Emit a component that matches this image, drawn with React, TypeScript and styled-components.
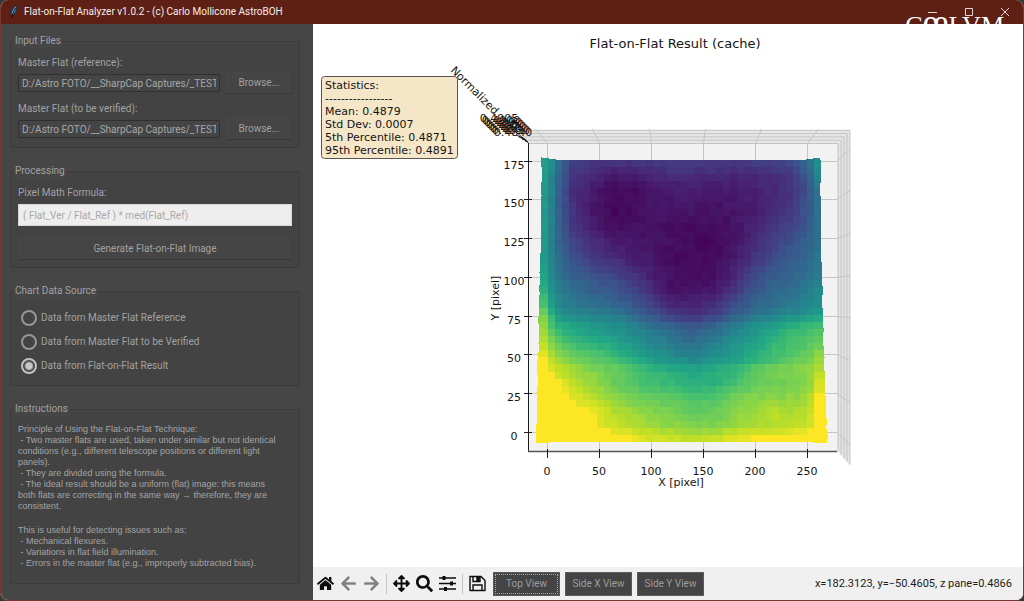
import React, { useState } from "react";
import styled, { createGlobalStyle } from "styled-components";
import { FaArrowLeft, FaArrowRight, FaArrowsAlt, FaHome, FaSearch } from "react-icons/fa";

const GlobalStyle = createGlobalStyle`
  * { box-sizing: border-box; }
  body { margin: 0; background: #2f3a38; }
  button, input { font: inherit; }
`;

const uiFont = `Roboto, "Noto Sans", sans-serif`;
const plotFont = `"DejaVu Sans", sans-serif`;

const Window = styled.div`
  position: relative;
  display: flex;
  flex-direction: column;
  min-height: 100vh;
  overflow: hidden;
  border: 1px solid #74392f;
  border-top: 0;
  border-radius: 8px;
  background: #ffffff;
  font-family: ${uiFont};
  font-size: 10px;
  line-height: 14px;
  color: #a2a2a2;
`;

const TitleBar = styled.header`
  display: flex;
  align-items: center;
  height: 24px;
  padding: 0 13px 0 8px;
  gap: 5px;
  background: #5e2015;
  color: #f4ecea;
`;

const Title = styled.h1`
  flex: 1;
  margin: 0;
  font-size: 10px;
  font-weight: 400;
`;

const WindowButtons = styled.div`
  display: flex;
  gap: 26px;
`;

const WindowButton = styled.button`
  display: flex;
  padding: 0;
  border: 0;
  background: none;
  color: #e8d8d4;
`;

const Watermark = styled.div`
  position: absolute;
  top: 7px;
  right: 19px;
  font-family: "Liberation Serif", serif;
  font-size: 26px;
  line-height: 30px;
  color: #ffffff;
  pointer-events: none;
`;

const WatermarkLigature = styled.span`
  font-size: 36px;
  line-height: 30px;
`;

const Body = styled.div`
  display: flex;
  flex: 1;
`;

const Sidebar = styled.aside`
  display: flex;
  flex-direction: column;
  gap: 16px;
  width: 312px;
  flex-shrink: 0;
  padding: 10px 13px 16px 9px;
  background: #464646;
`;

const Group = styled.fieldset<{ $grow?: boolean }>`
  margin: 0;
  min-width: 0;
  padding: 8px 7px 7px;
  border: 1px solid #3b3b3b;
  border-radius: 2px;
  background: #434343;
  flex: ${(p) => (p.$grow ? "1" : "none")};
`;

const Legend = styled.legend`
  margin-left: -4px;
  padding: 0 2px 0 1px;
  background: #464646;
`;

const Field = styled.div`
  display: flex;
  flex-direction: column;
  gap: 2px;
  & + & { margin-top: 8px; }
`;

const FileRow = styled.div`
  display: flex;
  align-items: center;
  gap: 6px;
`;

const PathInput = styled.input`
  flex: 1;
  min-width: 0;
  height: 18px;
  padding: 0 3px;
  border: 1px solid #303030;
  border-radius: 2px;
  background: #454545;
  color: #a8a8a8;
  outline: 0;
`;

const FormulaInput = styled.input`
  width: 100%;
  height: 22px;
  margin-top: 2px;
  padding: 0 4px;
  border: 1px solid #d8d8d8;
  background: #eeeeee;
  color: #a9a9a9;
  outline: 0;
`;

const PanelButton = styled.button<{ $wide?: boolean }>`
  width: ${(p) => (p.$wide ? "100%" : "66px")};
  height: 22px;
  margin-top: ${(p) => (p.$wide ? "12px" : "0")};
  padding: 0;
  border: 1px solid #484848;
  border-bottom-color: #383838;
  border-right-color: #3e3e3e;
  border-radius: 2px;
  background: #454545;
  color: inherit;
`;

const RadioRow = styled.label`
  display: flex;
  align-items: center;
  gap: 4px;
  height: 24px;
  padding-left: 3px;
`;

const Radio = styled.input`
  appearance: none;
  width: 16px;
  height: 16px;
  margin: 0;
  border: 2px solid #969696;
  border-radius: 50%;
  &:checked {
    border-color: #c2c2c2;
    background: radial-gradient(circle, #c8c8c8 3px, transparent 5px);
  }
`;

const Instructions = styled.div`
  font-family: "Liberation Sans", sans-serif;
  font-size: 9px;
  line-height: 11px;
  white-space: pre-wrap;
  color: #a4a4a4;
  p { margin: 0 0 13px; }
  p:last-child { margin: 0; }
`;

const Main = styled.main`
  display: flex;
  flex-direction: column;
  flex: 1;
  min-width: 0;
  background: #ffffff;
`;

const Plot = styled.svg`
  display: block;
  flex: 1 1 0;
  width: 100%;
  min-height: 0;
  font-family: ${plotFont};
  font-size: 11px;
  fill: #141414;
`;

const Toolbar = styled.div`
  display: flex;
  align-items: center;
  gap: 4px;
  height: 33px;
  padding: 0 11px 0 3px;
  background: #f0f0f0;
  color: #0c0c0c;
`;

const IconButton = styled.button<{ $dim?: boolean }>`
  display: flex;
  align-items: center;
  justify-content: center;
  width: 19px;
  height: 24px;
  padding: 0;
  border: 0;
  background: none;
  font-size: 17px;
  color: ${(p) => (p.$dim ? "#808080" : "#0c0c0c")};
`;

const Separator = styled.span`
  width: 1px;
  height: 20px;
  margin: 0 1px;
  background: #c4c4c4;
`;

const Views = styled.div`
  display: flex;
  gap: 5px;
  margin-left: 2px;
`;

const ViewButton = styled.button<{ $focused?: boolean }>`
  width: 67px;
  height: 24px;
  padding: 0;
  border: 1px solid #5c5c5c;
  background: #444444;
  color: #9c9c9c;
  outline: ${(p) => (p.$focused ? "1px dotted #a8a8a8" : "none")};
  outline-offset: -3px;
`;

const Coordinates = styled.output`
  margin-left: auto;
  font-size: 11px;
  color: #1c1c1c;
  white-space: nowrap;
`;

const VIRIDIS = [
  [68, 1, 84], [72, 36, 117], [65, 68, 135], [53, 95, 141], [42, 120, 142], [33, 145, 140],
  [34, 168, 132], [68, 191, 112], [122, 209, 81], [189, 223, 38], [253, 231, 37],
];

function viridis(t: number) {
  const s = Math.max(0, Math.min(0.9999, t)) * 10;
  const i = Math.floor(s);
  const c = VIRIDIS[i].map((v, k) => Math.round(v + (VIRIDIS[i + 1][k] - v) * (s - i)));
  return `rgb(${c.join(",")})`;
}

// Flat ratio samples in percent of the colour range, at the columns and rows listed here.
const SAMPLE_X = [545, 553, 560, 573, 593, 613, 633, 653, 673, 693, 713, 733, 753, 773, 793, 807, 817];
const SAMPLES: [number, number[]][] = [
  [160, [58, 48, 35, 20, 17, 16, 16, 17, 18, 18, 18, 18, 18, 20, 24, 35, 50]],
  [177, [56, 44, 32, 14, 11, 6, 7, 10, 12, 12, 11, 10, 11, 13, 16, 28, 45]],
  [193, [54, 42, 30, 13, 7, 2, 3, 6, 8, 7, 6, 7, 8, 11, 15, 24, 38]],
  [210, [54, 42, 29, 15, 6, 1, 3, 6, 4, 6, 5, 6, 7, 12, 17, 26, 36]],
  [227, [53, 42, 30, 17, 8, 4, 4, 5, 3, 3, 3, 5, 9, 16, 20, 28, 36]],
  [243, [53, 43, 31, 20, 13, 8, 6, 5, 4, 3, 2, 5, 12, 18, 26, 31, 37]],
  [260, [54, 43, 34, 26, 18, 14, 9, 6, 3, 3, 3, 7, 15, 24, 30, 34, 39]],
  [277, [57, 46, 38, 31, 26, 22, 15, 8, 4, 3, 4, 10, 22, 29, 33, 37, 42]],
  [293, [64, 50, 43, 37, 32, 28, 22, 12, 5, 5, 7, 16, 27, 33, 38, 42, 47]],
  [310, [75, 56, 48, 44, 40, 37, 31, 22, 13, 12, 15, 25, 34, 39, 44, 47, 51]],
  [319, [82, 65, 55, 52, 48, 45, 39, 30, 22, 18, 23, 33, 42, 48, 54, 57, 60]],
  [327, [84, 70, 62, 59, 54, 50, 45, 37, 32, 28, 33, 42, 50, 57, 65, 67, 70]],
  [343, [90, 80, 75, 68, 64, 59, 51, 45, 40, 36, 42, 50, 57, 65, 70, 72, 76]],
  [360, [97, 89, 84, 79, 75, 71, 62, 54, 49, 46, 51, 56, 62, 70, 75, 78, 84]],
  [370, [100, 95, 91, 86, 81, 77, 72, 67, 62, 60, 62, 66, 75, 79, 82, 84, 90]],
  [383, [100, 100, 97, 90, 85, 77, 72, 69, 66, 62, 63, 68, 76, 78, 79, 81, 93]],
  [397, [100, 100, 100, 95, 89, 83, 79, 76, 74, 71, 72, 78, 81, 82, 83, 85, 97]],
  [413, [100, 100, 100, 100, 97, 90, 86, 82, 79, 76, 76, 82, 86, 89, 88, 90, 99]],
  [427, [100, 100, 100, 100, 98, 92, 89, 85, 83, 81, 80, 85, 87, 89, 90, 92, 100]],
  [433, [100, 100, 100, 100, 100, 97, 94, 91, 89, 87, 87, 91, 93, 95, 96, 98, 100]],
  [441, [100, 100, 100, 100, 100, 99, 97, 94, 92, 92, 93, 96, 99, 100, 100, 100, 100]],
];

function bracket(list: number[], v: number): [number, number] {
  if (v <= list[0]) return [0, 0];
  for (let i = 0; i < list.length - 1; i++) {
    if (v < list[i + 1]) return [i, (v - list[i]) / (list[i + 1] - list[i])];
  }
  return [list.length - 2, 1];
}

const SAMPLE_Y = SAMPLES.map((s) => s[0]);

function valueAt(x: number, y: number) {
  const [i, u] = bracket(SAMPLE_X, x);
  const [j, v] = bracket(SAMPLE_Y, y);
  const top = SAMPLES[j][1];
  const bottom = SAMPLES[j + 1][1];
  const a = top[i] + (top[i + 1] - top[i]) * u;
  const b = bottom[i] + (bottom[i + 1] - bottom[i]) * u;
  return (a + (b - a) * v) / 100;
}

function noise(a: number, b: number) {
  const n = Math.sin(a * 12.9898 + b * 78.233) * 43758.5453;
  return n - Math.floor(n) - 0.5;
}

const GRID = 40;
const rowY = (j: number) => 160 + (282 * j) / GRID;

// The outer columns lean outwards towards the bottom; the inner ones stay straight.
function columnX(i: number, y: number) {
  const drop = (y - 160) / 283;
  if (i === 0) return 541.5 - 6 * Math.pow(drop, 1.5) + noise(y, 3) * 1.2;
  if (i === GRID) return 820.5 + 7 * Math.pow(drop, 1.8) + noise(y, 5) * 1.2;
  return 541.5 + (279 * i) / GRID;
}

function cornerY(i: number, j: number) {
  const edge = Math.max(0, 3 - Math.min(i, GRID - i)) / 3;
  if (j === 0) return 160.4 - edge * 3;
  if (j === GRID) return 441.5 + edge * 1.6;
  return rowY(j);
}

function buildSurface() {
  const cells: { d: string; fill: string }[] = [];
  for (let j = 0; j < GRID; j++) {
    for (let i = 0; i < GRID; i++) {
      const y0 = rowY(j);
      const y1 = rowY(j + 1);
      const value = valueAt(541.5 + 279 * ((i + 0.5) / GRID), (y0 + y1) / 2);
      cells.push({
        d: `M${columnX(i, y0)} ${cornerY(i, j)}L${columnX(i + 1, y0)} ${cornerY(i + 1, j)}L${columnX(i + 1, y1)} ${cornerY(i + 1, j + 1)}L${columnX(i, y1)} ${cornerY(i, j + 1)}Z`,
        fill: viridis(value >= 0.965 ? 1 : value + noise(i, j) * 0.028),
      });
    }
  }
  return cells;
}

const SURFACE = buildSurface();

// Each tick: value, position on the near pane, position on the far edge of the side pane.
const X_TICKS = [[0, 547, 535], [50, 599, 592], [100, 651, 649], [150, 703, 705], [200, 755, 761], [250, 807, 818]];
const Y_TICKS = [
  [175, 161, 148], [150, 199, 190], [125, 238, 233], [100, 277, 275],
  [75, 316, 317], [50, 354, 360], [25, 393, 402], [0, 432, 444],
];
const STATISTICS = [
  "Statistics:", "-----------------", "Mean: 0.4879", "Std Dev: 0.0007",
  "5th Percentile: 0.4871", "95th Percentile: 0.4891",
];
const Z_TICKS = ["0.4905", "0.4900", "0.4890", "0.4880", "0.4870", "0.4860", "0.4850", "0.4840"];

function SurfacePlot() {
  return (
    <Plot viewBox="313 24 710 543" role="img" aria-label="Flat-on-Flat Result surface plot">
      <text x="675" y="48" fontSize="13" textAnchor="middle">Flat-on-Flat Result (cache)</text>

      <path d="M529 143H838V451H529Z" fill="#f2f2f2" />
      <path d="M515 130H850L838 143H529Z" fill="#e6e6e6" />
      <path d="M838 143L850 130V465L838 451Z" fill="#e3e3e3" />
      <g fill="none" stroke="#c4c4c4">
        {[0, 1, 2, 3, 4].map((k) => (
          <path key={k} d={`M${529 - k * 3.5} ${143.5 - k * 3.3}H${838 + k * 3}V${452 + k * 3.2}`} />
        ))}
        {X_TICKS.map(([v, near, far]) => (
          <path key={v} d={`M${near + 0.5} 451V143.5L${far + 0.5} 129`} />
        ))}
        {Y_TICKS.map(([v, near, far]) => (
          <path key={v} d={`M529 ${near + 0.5}H837L850 ${far + 0.5}`} />
        ))}
      </g>

      <g shapeRendering="crispEdges">
        {SURFACE.map((c) => (
          <path key={c.d} d={c.d} fill={c.fill} />
        ))}
      </g>

      <g stroke="#1c1c1c" fill="none">
        <path d="M515 131L528.5 143V451.5" />
        <path d="M528 451.5H837" stroke="#555555" strokeWidth="1.4" />
        {X_TICKS.map(([v, near]) => <path key={v} d={`M${near + 0.5} 449V458`} />)}
        {Y_TICKS.map(([v, near]) => <path key={v} d={`M524 ${near + 0.5}H532`} />)}
        {[0, 1, 2, 3].map((k) => <path key={k} d={`M${516 + k * 3} ${135 + k * 2}L${525 + k} ${139 + k}`} />)}
      </g>

      <g textAnchor="middle">
        {X_TICKS.map(([v, near]) => <text key={v} x={near} y="475">{v}</text>)}
        {Y_TICKS.map(([v, near]) => <text key={v} x="514" y={near + 8}>{v}</text>)}
        <text x="681" y="486">X [pixel]</text>
        <text transform="translate(499 298) rotate(-90)">Y [pixel]</text>
        {Z_TICKS.map((t, k) => <text key={t} x={499 + k * 2} y={122 + k * 2}>{t}</text>)}
      </g>
      <text transform="translate(450 71) rotate(45)" fontSize="11">Normalized</text>

      <rect x="321.5" y="76.5" width="136" height="82" rx="3" fill="#f5e6c8" stroke="#5a564e" />
      {STATISTICS.map((line, k) => (
        <text key={line} x="325" y={89 + k * 13}>{line}</text>
      ))}
    </Plot>
  );
}

function FeatherIcon() {
  return (
    <svg width="10" height="14" viewBox="0 0 10 14" aria-hidden="true">
      <path d="M7.500 .5C4.500 2 2 5.500 2.300 10L3.500 10.500C6.500 8.500 8 5 7.500 .5Z" fill="#4a9bd8" stroke="#16253c" strokeWidth=".8" />
      <path d="M6.500 3C5 6 3.500 9 2.500 13.500" stroke="#111111" fill="none" />
    </svg>
  );
}

function SlidersIcon() {
  return (
    <svg width="17" height="17" viewBox="0 0 17 17" aria-hidden="true">
      <path d="M0 3H17M0 8.500H17M0 14H17" stroke="currentColor" strokeWidth="1.500" />
      <path d="M3.500 1H6.500V5H3.500ZM11 6.500H14V10.500H11ZM5 12H8V16H5Z" fill="currentColor" />
    </svg>
  );
}

function SaveIcon() {
  return (
    <svg width="17" height="17" viewBox="0 0 17 17" aria-hidden="true" fill="none" stroke="currentColor" strokeWidth="1.400">
      <path d="M1 1.500H12L16 5.500V15.500H1Z" strokeLinejoin="round" />
      <path d="M4 15V10H13V15M4 2V6.500H11V2" />
      <path d="M8 2.500H10V5.500H8Z" fill="currentColor" />
    </svg>
  );
}

const PATH = "D:/Astro FOTO/__SharpCap Captures/_TEST/Flat_Master.fits";
const SOURCES = ["Data from Master Flat Reference", "Data from Master Flat to be Verified", "Data from Flat-on-Flat Result"];

export default function App() {
  const [source, setSource] = useState(2);
  return (
    <>
      <GlobalStyle />
      <Window>
        <TitleBar>
          <FeatherIcon />
          <Title>Flat-on-Flat Analyzer v1.0.2 - (c) Carlo Mollicone AstroBOH</Title>
          <WindowButtons>
            <WindowButton aria-label="Minimize">
              <svg width="11" height="10" viewBox="0 0 11 10"><path d="M1 5.500H10" stroke="currentColor" /></svg>
            </WindowButton>
            <WindowButton aria-label="Maximize">
              <svg width="10" height="10" viewBox="0 0 10 10"><path d="M1.500 1.500H8.500V8.500H1.500Z" fill="none" stroke="currentColor" /></svg>
            </WindowButton>
            <WindowButton aria-label="Close">
              <svg width="10" height="10" viewBox="0 0 10 10"><path d="M1 1L9 9M9 1L1 9" stroke="currentColor" /></svg>
            </WindowButton>
          </WindowButtons>
        </TitleBar>

        <Body>
          <Sidebar>
            <Group>
              <Legend>Input Files</Legend>
              <Field>
                <label htmlFor="reference">Master Flat (reference):</label>
                <FileRow>
                  <PathInput id="reference" defaultValue={PATH} />
                  <PanelButton>Browse...</PanelButton>
                </FileRow>
              </Field>
              <Field>
                <label htmlFor="verified">Master Flat (to be verified):</label>
                <FileRow>
                  <PathInput id="verified" defaultValue={PATH} />
                  <PanelButton>Browse...</PanelButton>
                </FileRow>
              </Field>
            </Group>

            <Group>
              <Legend>Processing</Legend>
              <Field>
                <label htmlFor="formula">Pixel Math Formula:</label>
                <FormulaInput id="formula" defaultValue="( Flat_Ver / Flat_Ref ) * med(Flat_Ref)" />
              </Field>
              <PanelButton $wide>Generate Flat-on-Flat Image</PanelButton>
            </Group>

            <Group>
              <Legend>Chart Data Source</Legend>
              {SOURCES.map((name, i) => (
                <RadioRow key={name}>
                  <Radio type="radio" name="source" checked={source === i} onChange={() => setSource(i)} />
                  {name}
                </RadioRow>
              ))}
            </Group>

            <Group $grow>
              <Legend>Instructions</Legend>
              <Instructions>
                <p>{`Principle of Using the Flat-on-Flat Technique:
 - Two master flats are used, taken under similar but not identical
conditions (e.g., different telescope positions or different light
panels).
 - They are divided using the formula.
 - The ideal result should be a uniform (flat) image: this means
both flats are correcting in the same way → therefore, they are
consistent.`}</p>
                <p>{`This is useful for detecting issues such as:
 - Mechanical flexures.
 - Variations in flat field illumination.
 - Errors in the master flat (e.g., improperly subtracted bias).`}</p>
              </Instructions>
            </Group>
          </Sidebar>

          <Main>
            <SurfacePlot />
            <Toolbar>
              <IconButton aria-label="Home"><FaHome /></IconButton>
              <IconButton $dim aria-label="Back"><FaArrowLeft /></IconButton>
              <IconButton $dim aria-label="Forward"><FaArrowRight /></IconButton>
              <Separator />
              <IconButton aria-label="Pan"><FaArrowsAlt /></IconButton>
              <IconButton aria-label="Zoom"><FaSearch /></IconButton>
              <IconButton aria-label="Configure subplots"><SlidersIcon /></IconButton>
              <Separator />
              <IconButton aria-label="Save"><SaveIcon /></IconButton>
              <Views>
                <ViewButton $focused>Top View</ViewButton>
                <ViewButton>Side X View</ViewButton>
                <ViewButton>Side Y View</ViewButton>
              </Views>
              <Coordinates>x=182.3123, y=−50.4605, z pane=0.4866</Coordinates>
            </Toolbar>
          </Main>
        </Body>
        <Watermark>C<WatermarkLigature>œ</WatermarkLigature>LVM</Watermark>
      </Window>
    </>
  );
}
